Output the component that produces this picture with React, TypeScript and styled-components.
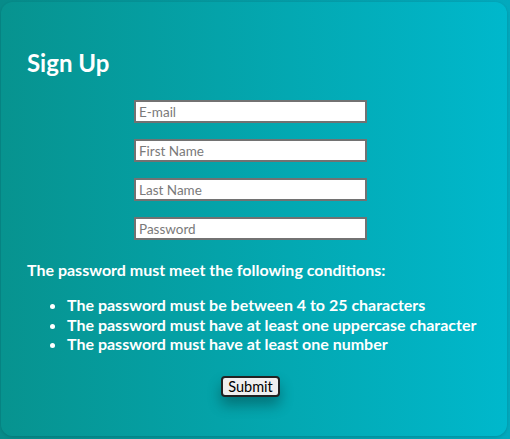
import React from 'react';
import styled, { createGlobalStyle } from 'styled-components';

const GlobalStyle = createGlobalStyle`
  html, body {
    margin: 0;
    padding: 0;
  }
  body {
    width: 510px;
    height: 439px;
    overflow: hidden;
    background: linear-gradient(90deg, #078b89 0%, #03a9bd 100%);
    font-family: Lato, "Open Sans", sans-serif;
  }
`;

const Card = styled.div`
  box-sizing: border-box;
  margin: 2px 3px 0 1px;
  height: 434px;
  border-radius: 12px;
  background: linear-gradient(90deg, #07938f 0%, #00b8cc 100%);
  box-shadow: 0 1px 3px rgba(0, 0, 0, 0.15);
  padding: 46px 33px 0 26px;
  color: #fff;
`;

const Title = styled.h1`
  margin: 0 0 23px;
  font-size: 24px;
  font-weight: 700;
  line-height: 29px;
`;

const Form = styled.form`
  display: flex;
  flex-direction: column;
  align-items: center;
  gap: 16px;
`;

const Field = styled.input`
  box-sizing: border-box;
  width: 233px;
  height: 23px;
  margin: 0;
  padding: 0 3px;
  border: 2px solid #727272;
  border-radius: 0;
  background: #fff;
  font-family: Lato, sans-serif;
  font-size: 13.5px;
  color: #222;
  &::placeholder {
    color: #7a7a7a;
  }
`;

const Conditions = styled.div`
  align-self: stretch;
  margin: 4px -30px 0 0;
  white-space: nowrap;
`;

const Heading = styled.p`
  margin: 0;
  font-size: 16px;
  font-weight: 700;
  line-height: 19px;
`;

const List = styled.ul`
  margin: 16px 0 0;
  padding-left: 40px;
  li {
    font-size: 16px;
    font-weight: 700;
    line-height: 19.5px;
  }
`;

const Submit = styled.button`
  margin-top: 6px;
  height: 21px;
  padding: 0 5px;
  border: 2px solid #222;
  border-radius: 4px;
  background: #efefef;
  font-family: Lato, sans-serif;
  font-size: 14.5px;
  color: #000;
  line-height: 15px;
  box-shadow: 0 8px 14px rgba(0, 0, 0, 0.3);
`;

const rules = [
  'The password must be between 4 to 25 characters',
  'The password must have at least one uppercase character',
  'The password must have at least one number',
];

export default function App() {
  return (
    <>
      <GlobalStyle />
      <Card>
        <Title>Sign Up</Title>
        <Form onSubmit={(e) => e.preventDefault()}>
          <Field type="email" placeholder="E-mail" />
          <Field type="text" placeholder="First Name" />
          <Field type="text" placeholder="Last Name" />
          <Field type="password" placeholder="Password" />
          <Conditions>
            <Heading>The password must meet the following conditions:</Heading>
            <List>
              {rules.map((r) => (
                <li key={r}>{r}</li>
              ))}
            </List>
          </Conditions>
          <Submit type="submit">Submit</Submit>
        </Form>
      </Card>
    </>
  );
}
